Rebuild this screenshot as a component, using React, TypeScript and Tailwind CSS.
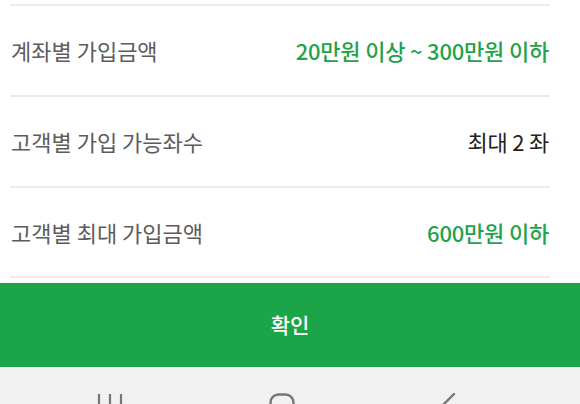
import React from 'react';

type Row = {
  label: string;
  value: string;
  tone: 'green' | 'dark';
};

const rows: Row[] = [
  { label: '계좌별 가입금액', value: '20만원 이상 ~ 300만원 이하', tone: 'green' },
  { label: '고객별 가입 가능좌수', value: '최대 2 좌', tone: 'dark' },
  { label: '고객별 최대 가입금액', value: '600만원 이하', tone: 'green' },
];

const Divider = () => <div className="h-[2px] bg-[#ebebeb]" />;

const NavBar = () => (
  <div className="flex h-[60px] shrink-0 items-start justify-center bg-[#f1f1f1] pt-[26px]">
    <div className="flex w-full justify-between pl-[97px] pr-[124px]">
      {/* recent apps */}
      <svg width="26" height="22" viewBox="0 0 26 22" fill="none" stroke="#767676" strokeWidth="2.2">
        <path d="M2 1v20M13 1v20M24 1v20" />
      </svg>
      {/* home */}
      <svg width="26" height="26" viewBox="0 0 26 26" fill="none" stroke="#767676" strokeWidth="2.4">
        <rect x="1.5" y="1.5" width="23" height="23" rx="8" />
      </svg>
      {/* back */}
      <svg width="16" height="26" viewBox="0 0 16 26" fill="none" stroke="#767676" strokeWidth="2.4" strokeLinecap="round">
        <path d="M14 1L2 13l12 12" />
      </svg>
    </div>
  </div>
);

export default function App() {
  return (
    <div
      className="flex h-[404px] w-[580px] flex-col overflow-hidden bg-white"
      style={{ fontFamily: '"Noto Sans CJK KR", "Noto Sans", sans-serif' }}
    >
      <div className="shrink-0 pl-[10px] pr-[30px] pt-[4px]">
        <Divider />
        {rows.map((row, i) => (
          <div key={row.label}>
            <div className={`flex items-center justify-between pl-[1px] pr-[1px] ${i === 2 ? 'h-[88px]' : 'h-[89px]'}`}>
              <span className="text-[22px] text-[#5c5c5c]">{row.label}</span>
              <span
                className={
                  row.tone === 'green'
                    ? 'text-[22px] font-medium tracking-[-0.2px] text-[#22a34a]'
                    : 'text-[22px] tracking-[-0.2px] text-[#222222]'
                }
              >
                {row.value}
              </span>
            </div>
            <Divider />
          </div>
        ))}
      </div>
      <div className="mt-[5px] flex h-[84px] shrink-0 items-center justify-center bg-[#1ba548] shadow-[0_-1px_2px_rgba(0,0,0,0.06)]">
        <span className="text-[21px] font-medium text-white">확인</span>
      </div>
      <NavBar />
    </div>
  );
}
